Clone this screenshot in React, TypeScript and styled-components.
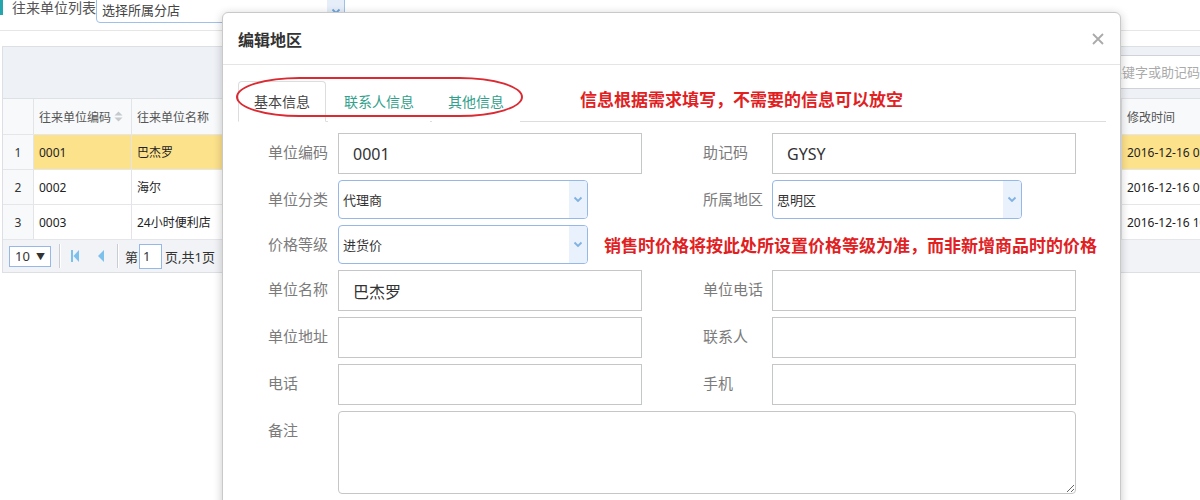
import styled, { createGlobalStyle } from "styled-components";

const GlobalStyle = createGlobalStyle`
  html, body { margin: 0; padding: 0; background: #fff; }
  body { font-family: "Noto Sans", "Noto Sans CJK SC", sans-serif; overflow: hidden; }
  * { box-sizing: border-box; }
`;

const Page = styled.div`
  position: relative; width: 1200px; height: 500px; overflow: hidden;
`;

/* ---------- background list page ---------- */
const TopBar = styled.div`
  height: 31px; border-bottom: 1px solid #e6e6e6;
  display: flex; align-items: flex-start;
`;
const TitleMark = styled.span`
  width: 3px; height: 15px; background: #25a6ad;
`;
const PageTitle = styled.span`
  margin-left: 9px; font-size: 14px; line-height: 15px; color: #555;
`;
const ShopSelect = styled.div`
  margin-top: -1px; width: 249px; height: 24px; display: flex;
  border: 1px solid #9fc0e8; border-radius: 0 0 4px 4px; background: #fff;
  span{ flex: 1; font-size: 13px; line-height: 20px; padding-left: 5px; color: #444; }
`;
const SmallArrow = styled.div`
  width: 17px; background: #e6eef9; display: flex; align-items: center; justify-content: center;
  border-radius: 0 0 3px 0;
`;

const Panel = styled.div`
  margin: 15px 0 0 2px; width: 1300px; border: 1px solid #dcdfe3; border-right: none;
`;
const Toolbar = styled.div`
  height: 51px; background: #eef1f5; padding-top: 8px;
`;
const SearchInput = styled.div`
  margin-left: 1072px; width: 200px; height: 34px; background: #fff;
  border: 1px solid #cfd3d8; font-size: 13px; color: #aaa; line-height: 32px; padding-left: 7px;
  font-family: "Noto Sans CJK SC", sans-serif; white-space: nowrap;
`;
const GridRow = styled.div<{ $head?: boolean; $selected?: boolean }>`
  display: grid; grid-template-columns: 31px 98px 990px 200px;
  height: ${p => (p.$head ? 37 : 35)}px;
  background: ${p => (p.$selected ? "#fde28c" : p.$head ? "#f7f9fb" : "#fff")};
  border-top: ${p => (p.$head ? "1px solid #dde1e6" : "none")};
  border-bottom: 1px solid #e4e6e9;
  font-size: 12px; color: ${p => (p.$head ? "#555" : "#222")};
`;
const GridCell = styled.div`
  border-right: 1px solid #e2e4e7; padding: 0 5px;
  display: flex; align-items: center; white-space: nowrap; overflow: hidden; gap: 3px;
`;
const NumCell = styled(GridCell)`
  justify-content: center; background: #f7f9fb; color: #333;
`;
const Pager = styled.div`
  height: 32px; background: #f1f3f6; display: flex; align-items: center;
  padding-left: 6px; font-size: 13px; color: #333;
`;
const PageSize = styled.div`
  width: 42px; height: 21px; border: 1px solid #95b8e7; background: #fff;
  display: flex; align-items: center; justify-content: space-between; padding: 0 5px;
  font-size: 13px;
  i{ font-style: normal; font-size: 9px; }
`;
const PagerSep = styled.span<{ $left: number }>`
  width: 1px; height: 24px; background: #c9ccd2; margin: 0 7px 0 ${p => p.$left}px;
  box-shadow: 1px 0 0 #fff;
`;
const PagerBtn = styled.span`
  width: 16px; height: 22px; display: flex; align-items: center; justify-content: center;
  margin-right: 9px;
`;
const PageNum = styled.div`
  width: 23px; height: 25px; border: 1px solid #95b8e7; background: #fff;
  margin: 0 3px 0 1px; line-height: 23px; padding-left: 3px;
`;

/* ---------- modal ---------- */
const Modal = styled.div`
  position: absolute; left: 222px; top: 12px; width: 899px; height: 520px;
  background: #fff; border: 1px solid #c9c9c9; border-radius: 6px 6px 0 0;
  box-shadow: 0 2px 10px rgba(0, 0, 0, 0.22);
`;
const ModalHeader = styled.div`
  height: 52px; border-bottom: 1px solid #e5e5e5;
  display: flex; align-items: center; padding: 0 16px 0 15px;
`;
const ModalTitle = styled.div`
  font-size: 16px; font-weight: 700; color: #333;
`;
const Close = styled.span`
  margin-left: auto; display: flex; cursor: pointer;
`;
const ModalBody = styled.div`
  padding: 16px 14px 0 15px;
`;
const TabBar = styled.div`
  position: relative; height: 41px; border-bottom: 1px solid #ddd;
  display: flex; align-items: flex-end;
`;
const Tab = styled.div<{ $active?: boolean }>`
  height: 41px; padding: 0 15px; margin-right: 2px; margin-bottom: -1px;
  font-size: 14px; line-height: 40px; color: ${p => (p.$active ? "#444" : "#31a08c")};
  background: #fff;
  border: 1px solid ${p => (p.$active ? "#ddd" : "transparent")};
  border-bottom-color: ${p => (p.$active ? "#fff" : "transparent")};
  border-radius: 4px 4px 0 0;
`;
const Ring = styled.div`
  position: absolute; left: -2px; top: -4px; width: 287px; height: 40px;
  border: 2px solid #dc2a32; border-radius: 70px / 22px; pointer-events: none;
`;
const Note = styled.div`
  font-size: 17px; font-weight: 700; color: #e1211f; white-space: nowrap;
  font-family: "Noto Sans CJK SC", sans-serif;
`;
const TabNote = styled(Note)`
  align-self: center; margin: 0 0 5px 58px;
`;

const Form = styled.div`
  display: grid; grid-template-columns: 70px 304px 130px 304px;
  row-gap: 6px; padding: 11px 0 0 30px;
`;
const Label = styled.div<{ $right?: boolean }>`
  font-size: 15px; line-height: 20px; color: #7b7b7b; padding-top: 9px;
  padding-left: ${p => (p.$right ? 61 : 0)}px; white-space: nowrap;
  font-family: "Noto Sans CJK SC", sans-serif;
`;
const TextInput = styled.input`
  width: 304px; height: 41px; border: 1px solid #c4c6c8; border-radius: 0;
  padding: 0 14px; font-size: 16px; color: #333; outline: none;
  font-family: "Noto Sans", "Noto Sans CJK SC", sans-serif;
`;
const Combo = styled.div`
  width: 250px; height: 39px; display: flex; flex-shrink: 0; background: #fff;
  border: 1px solid #95b8e7; border-radius: 4px; overflow: hidden;
  span{ flex: 1; font-size: 13px; color: #333; line-height: 37px; padding-left: 4px;
        font-family: "Noto Sans CJK SC", sans-serif; }
`;
const ComboArrow = styled.div`
  width: 18px; background: #e9f1fc; display: flex; align-items: center; justify-content: center;
`;
const Wide = styled.div`
  grid-column: span 3; display: flex; align-items: center; gap: 16px;
`;
const Memo = styled.textarea`
  width: 738px; height: 83px; border: 1px solid #c4c6c8; border-radius: 4px;
  resize: vertical; outline: none; font-size: 14px;
`;

const Chevron = ({ color = "#7fb2e3" }: { color?: string }) => (
  <svg width="10" height="7" viewBox="0 0 10 7">
    <polyline points="1.5,1.5 5,5 8.5,1.5" fill="none" stroke={color} strokeWidth="1.8" />
  </svg>
);

const SortIcon = () => (
  <svg width="9" height="11" viewBox="0 0 9 11" style={{ flexShrink: 0 }}>
    <polygon points="4.5,0.5 8.5,4.5 0.5,4.5" fill="#c6c9cc" />
    <polygon points="0.5,6.5 8.5,6.5 4.5,10.5" fill="#c6c9cc" />
  </svg>
);

const rows = [
  { no: 1, code: "0001", name: "巴杰罗", time: "2016-12-16 08:30:12" },
  { no: 2, code: "0002", name: "海尔", time: "2016-12-16 09:12:40" },
  { no: 3, code: "0003", name: "24小时便利店", time: "2016-12-16 10:05:21" },
];

function Field({ label, value, right }: { label: string; value?: string; right?: boolean }) {
  return (
    <>
      <Label $right={right}>{label}</Label>
      <div><TextInput readOnly value={value ?? ""} /></div>
    </>
  );
}

export default function App() {
  return (
    <Page>
      <GlobalStyle />
      <TopBar>
        <TitleMark />
        <PageTitle>往来单位列表</PageTitle>
        <ShopSelect>
          <span>选择所属分店</span>
          <SmallArrow><Chevron color="#6fa6dd" /></SmallArrow>
        </ShopSelect>
      </TopBar>

      <Panel>
        <Toolbar>
          <SearchInput>输入关键字或助记码</SearchInput>
        </Toolbar>
        <GridRow $head>
          <NumCell />
          <GridCell>往来单位编码<SortIcon /></GridCell>
          <GridCell>往来单位名称</GridCell>
          <GridCell>修改时间</GridCell>
        </GridRow>
        {rows.map(r => (
          <GridRow key={r.no} $selected={r.no === 1}>
            <NumCell>{r.no}</NumCell>
            <GridCell>{r.code}</GridCell>
            <GridCell>{r.name}</GridCell>
            <GridCell>{r.time}</GridCell>
          </GridRow>
        ))}
        <Pager>
          <PageSize>10 <i>▼</i></PageSize>
          <PagerSep $left={8} />
          <PagerBtn>
            <svg width="8" height="12" viewBox="0 0 8 12">
              <rect x="0" y="0" width="2" height="12" fill="#7cc0ec" />
              <polygon points="8,0 8,12 2.5,6" fill="#7cc0ec" />
            </svg>
          </PagerBtn>
          <PagerBtn>
            <svg width="7" height="12" viewBox="0 0 7 12">
              <polygon points="7,0 7,12 1,6" fill="#7cc0ec" />
            </svg>
          </PagerBtn>
          <PagerSep $left={0} />
          第<PageNum>1</PageNum>页,共1页
          <PagerSep $left={8} />
        </Pager>
      </Panel>

      <Modal>
        <ModalHeader>
          <ModalTitle>编辑地区</ModalTitle>
          <Close>
            <svg width="12" height="12" viewBox="0 0 12 12">
              <path d="M1 1 L11 11 M11 1 L1 11" stroke="#aaa" strokeWidth="1.8" />
            </svg>
          </Close>
        </ModalHeader>
        <ModalBody>
          <TabBar>
            <Tab $active>基本信息</Tab>
            <Tab>联系人信息</Tab>
            <Tab>其他信息</Tab>
            <TabNote>信息根据需求填写，不需要的信息可以放空</TabNote>
            <Ring />
          </TabBar>

          <Form>
            <Field label="单位编码" value="0001" />
            <Field label="助记码" value="GYSY" right />

            <Label>单位分类</Label>
            <div><Combo><span>代理商</span><ComboArrow><Chevron /></ComboArrow></Combo></div>
            <Label $right>所属地区</Label>
            <div><Combo><span>思明区</span><ComboArrow><Chevron /></ComboArrow></Combo></div>

            <Label>价格等级</Label>
            <Wide>
              <Combo><span>进货价</span><ComboArrow><Chevron /></ComboArrow></Combo>
              <Note>销售时价格将按此处所设置价格等级为准，而非新增商品时的价格</Note>
            </Wide>

            <Field label="单位名称" value="巴杰罗" />
            <Field label="单位电话" right />
            <Field label="单位地址" />
            <Field label="联系人" right />
            <Field label="电话" />
            <Field label="手机" right />

            <Label>备注</Label>
            <Wide><Memo /></Wide>
          </Form>
        </ModalBody>
      </Modal>
    </Page>
  );
}
